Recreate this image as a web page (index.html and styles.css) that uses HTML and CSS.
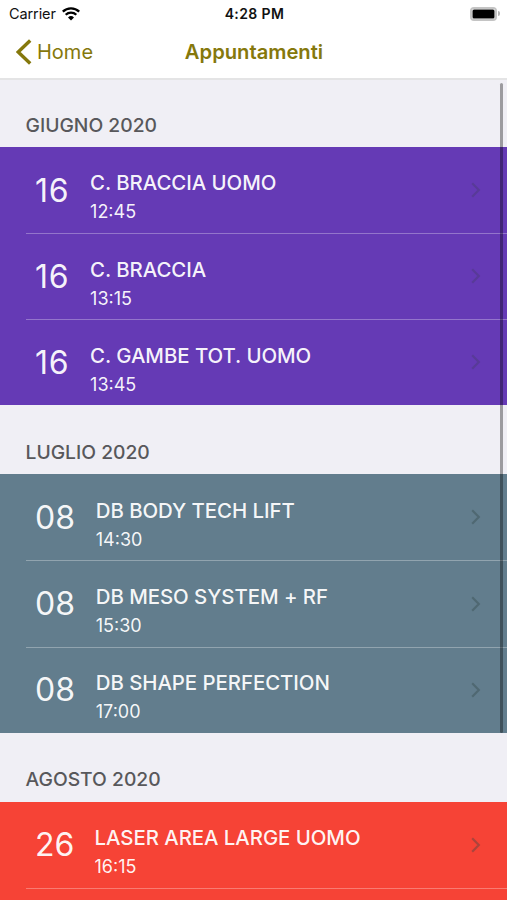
FILE: index.html
```
<!DOCTYPE html>
<html lang="it">
  <head>
    <meta charset="utf-8">
    <title>Appuntamenti</title>
    <link rel="stylesheet" href="styles.css">
  </head>
  <body>
    <svg class="symbols">
      <symbol id="chevron" viewBox="0 0 10 16">
        <path d="M1.2 1.2 L7.8 8 L1.2 14.8" fill="none" stroke="currentColor" stroke-width="2.2" />
      </symbol>
    </svg>
    <header class="header">
      <div class="status-bar">
        <div class="carrier">
          <span>Carrier</span>
          <svg class="wifi" viewBox="0 0 18 14">
            <path d="M0.8 4.6 A11.8 11.8 0 0 1 17.2 4.6" />
            <path d="M3.7 7.7 A7.6 7.6 0 0 1 14.3 7.7" />
            <path class="wifi-dot" d="M9 13.6 L6 10.5 A4.4 4.4 0 0 1 12 10.5 Z" />
          </svg>
        </div>
        <div class="clock">4:28 PM</div>
        <div class="battery">
          <div class="battery-body"><div class="battery-level"></div></div>
          <div class="battery-tip"></div>
        </div>
      </div>
      <div class="nav-bar">
        <a class="back">
          <svg class="back-icon" viewBox="0 0 16 26">
            <path d="M14.2 1.5 L2.2 13 L14.2 24.5" />
          </svg>
          <span>Home</span>
        </a>
        <div class="title">Appuntamenti</div>
      </div>
    </header>
    <main class="list">
      <h2 class="month month-first">GIUGNO 2020</h2>
      <div class="group purple">
        <div class="row">
          <div class="day">16</div>
          <div class="info">
            <div class="name">C. BRACCIA UOMO</div>
            <div class="time">12:45</div>
          </div>
          <svg class="chevron"><use href="#chevron" /></svg>
        </div>
        <div class="row">
          <div class="day">16</div>
          <div class="info">
            <div class="name">C. BRACCIA</div>
            <div class="time">13:15</div>
          </div>
          <svg class="chevron"><use href="#chevron" /></svg>
        </div>
        <div class="row">
          <div class="day">16</div>
          <div class="info">
            <div class="name">C. GAMBE TOT. UOMO</div>
            <div class="time">13:45</div>
          </div>
          <svg class="chevron"><use href="#chevron" /></svg>
        </div>
      </div>
      <h2 class="month">LUGLIO 2020</h2>
      <div class="group blue">
        <div class="row">
          <div class="day">08</div>
          <div class="info">
            <div class="name">DB BODY TECH LIFT</div>
            <div class="time">14:30</div>
          </div>
          <svg class="chevron"><use href="#chevron" /></svg>
        </div>
        <div class="row">
          <div class="day">08</div>
          <div class="info">
            <div class="name">DB MESO SYSTEM + RF</div>
            <div class="time">15:30</div>
          </div>
          <svg class="chevron"><use href="#chevron" /></svg>
        </div>
        <div class="row">
          <div class="day">08</div>
          <div class="info">
            <div class="name">DB SHAPE PERFECTION</div>
            <div class="time">17:00</div>
          </div>
          <svg class="chevron"><use href="#chevron" /></svg>
        </div>
      </div>
      <h2 class="month">AGOSTO 2020</h2>
      <div class="group red">
        <div class="row">
          <div class="day">26</div>
          <div class="info">
            <div class="name">LASER AREA LARGE UOMO</div>
            <div class="time">16:15</div>
          </div>
          <svg class="chevron"><use href="#chevron" /></svg>
        </div>
        <div class="row"></div>
      </div>
      <div class="scrollbar"></div>
    </main>
  </body>
</html>
```
FILE: styles.css
```
* {
  box-sizing: border-box;
}

body {
  margin: 0;
  height: 900px;
  overflow: hidden;
  display: flex;
  flex-direction: column;
  font-family: Inter, "Liberation Sans", sans-serif;
  background-color: #f0eff5;
}

.symbols {
  display: none;
}

.header {
  height: 80px;
  flex: none;
  background-color: white;
  border-bottom: 2px solid #e4e4e5;
}

.status-bar {
  display: grid;
  grid-template-columns: 1fr auto 1fr;
  align-items: center;
  height: 27px;
  padding: 0 7px 0 9px;
  color: #111;
}

.carrier {
  display: flex;
  align-items: center;
  gap: 6px;
  font-size: 14.5px;
  letter-spacing: -0.1px;
}

.wifi {
  width: 18px;
  height: 14px;
  fill: none;
  stroke: black;
  stroke-width: 2.3;
}

.wifi-dot {
  fill: black;
  stroke: none;
}

.clock {
  font-size: 14px;
  font-weight: 600;
  letter-spacing: 0.4px;
}

.battery {
  display: flex;
  align-items: center;
  justify-content: flex-end;
  gap: 1px;
}

.battery-body {
  width: 27px;
  height: 14px;
  padding: 1px;
  border: 2px solid #c4c4c4;
  border-radius: 4px;
}

.battery-level {
  height: 100%;
  border-radius: 1px;
  background-color: black;
  box-shadow: 0 0 0 0.5px black;
}

.battery-tip {
  width: 2px;
  height: 5px;
  border-radius: 0 2px 2px 0;
  background-color: #b5b5b5;
}

.nav-bar {
  display: grid;
  grid-template-columns: 1fr auto 1fr;
  align-items: center;
  height: 50px;
  padding: 0 15px 0 16px;
  color: #85780c;
  font-size: 20px;
}

.back {
  display: flex;
  align-items: center;
  gap: 5px;
}

.back-icon {
  width: 16px;
  height: 26px;
  fill: none;
  stroke: currentColor;
  stroke-width: 3.4;
}

.title {
  font-size: 20.2px;
  font-weight: 600;
  line-height: 24px;
}

.list {
  position: relative;
  flex: 1;
  min-height: 0;
  overflow: hidden;
}

.month {
  height: 69px;
  margin: 0;
  padding: 34.5px 0 0 25.5px;
  color: #58585b;
  font-size: 19.3px;
  font-weight: 500;
  line-height: 24px;
}

.month-first {
  height: 67.1px;
  padding-top: 33px;
}

.group {
  color: rgba(255, 255, 255, 0.95);
}

.purple {
  background-color: #653ab5;
}

.blue {
  background-color: #627d8d;
}

.red {
  background-color: #f64336;
}

.row {
  display: flex;
  height: 86.1px;
  padding-left: 35px;
  background-image: linear-gradient(rgba(255, 255, 255, 0.3), rgba(255, 255, 255, 0.3));
  background-repeat: no-repeat;
  background-size: 100% 1px;
  background-position: 26px 0;
}

.row:first-child {
  background-image: none;
}

.day {
  padding-top: 23.6px;
  font-size: 32px;
  line-height: 40px;
  font-weight: 400;
}

.purple .day {
  letter-spacing: 0.7px;
}

.info {
  flex: 1;
  padding: 23.4px 0 0 20.8px;
}

.red .info {
  padding-left: 20.2px;
}

.name {
  font-size: 20.4px;
  font-weight: 500;
  line-height: 26px;
  letter-spacing: -0.05px;
}

.time {
  margin-top: 3px;
  font-size: 18px;
  line-height: 26px;
}

.chevron {
  align-self: center;
  width: 10px;
  height: 16px;
  margin-right: 26px;
  color: rgba(50, 70, 70, 0.38);
}

.purple .chevron {
  color: rgba(70, 60, 110, 0.4);
}

.scrollbar {
  position: absolute;
  top: 3px;
  right: 4px;
  width: 3px;
  height: 650px;
  border-radius: 2px;
  background-color: rgba(0, 0, 0, 0.35);
}
```
